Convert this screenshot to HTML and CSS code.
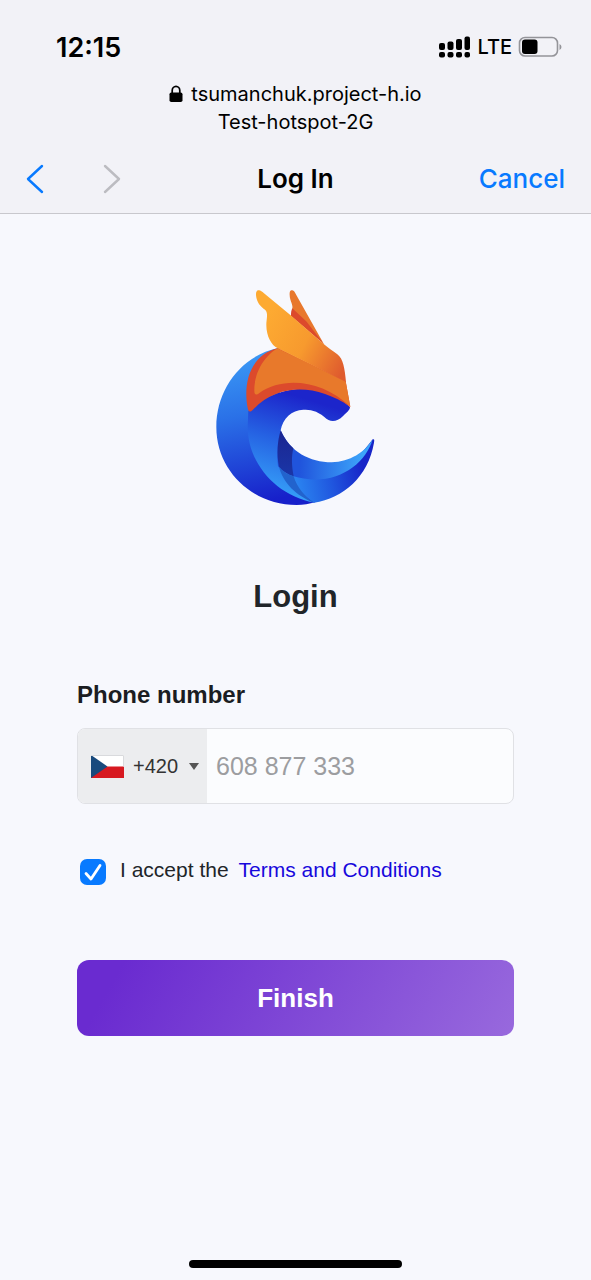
FILE: index.html
```html
<!DOCTYPE html>
<html lang="en">
<head>
<meta charset="utf-8">
<meta name="viewport" content="width=device-width, initial-scale=1">
<title>Log In</title>
<link rel="stylesheet" href="styles.css">
</head>
<body>
<header class="chrome">
  <div class="status">
    <span class="clock">12:15</span>
    <div class="indicators">
      <svg class="signal" width="32" height="22" viewBox="0 0 32 22" aria-hidden="true">
        <g fill="#000">
          <rect x="0" y="7" width="6" height="7" rx="2"/><rect x="8.500" y="5.500" width="6" height="8.500" rx="2"/><rect x="17" y="3" width="6" height="11" rx="2"/><rect x="25.500" y="0.500" width="5.500" height="13.500" rx="2"/>
          <rect x="0" y="16" width="6" height="5.500" rx="2"/><rect x="8.500" y="16" width="6" height="5.500" rx="2"/><rect x="17" y="16" width="6" height="5.500" rx="2"/><rect x="25.500" y="16" width="5.500" height="5.500" rx="2"/>
        </g>
      </svg>
      <span class="network">LTE</span>
      <svg class="battery" width="44" height="22" viewBox="0 0 44 22" aria-hidden="true">
        <rect x="1.500" y="1.500" width="38" height="18.500" rx="5.500" fill="none" stroke="#949499" stroke-width="1.600"/>
        <rect x="4" y="3.500" width="15.500" height="14.500" rx="3" fill="#000"/>
        <path d="M41.500 8q2 1 2 3t-2 3z" fill="#949499"/>
      </svg>
    </div>
  </div>
  <div class="site">
    <div class="host">
      <svg width="14" height="18" viewBox="0 0 14 18" aria-hidden="true"><rect x="0.500" y="7.500" width="13" height="9.500" rx="1.800"/><path d="M3.200 8.500V5.500a3.800 4.200 0 0 1 7.600 0v3" fill="none" stroke="#000" stroke-width="1.700"/></svg>
      <span>tsumanchuk.project-h.io</span>
    </div>
    <div>Test-hotspot-2G</div>
  </div>
  <nav class="toolbar">
    <div class="arrows">
      <button class="arrow" type="button" aria-label="Back"><svg width="18" height="30" viewBox="0 0 18 30"><path d="M16 2L2 15L16 28" fill="none" stroke="#087aff" stroke-width="2.400" stroke-linecap="round" stroke-linejoin="round"/></svg></button>
      <button class="arrow" type="button" aria-label="Forward" disabled><svg width="18" height="30" viewBox="0 0 18 30"><path d="M2 2L16 15L2 28" fill="none" stroke="#bcbcc1" stroke-width="2.400" stroke-linecap="round" stroke-linejoin="round"/></svg></button>
    </div>
    <span class="title">Log In</span>
    <button class="cancel" type="button">Cancel</button>
  </nav>
</header>
<main class="page">
  <svg class="logo" width="160" height="218" viewBox="48 26 480 654" role="img" aria-label="Logo">
    <defs>
      <linearGradient id="back" gradientUnits="userSpaceOnUse" x1="120" y1="230" x2="210" y2="660"><stop offset="0" stop-color="#3a98f5"/><stop offset="0.400" stop-color="#2a70e7"/><stop offset="0.750" stop-color="#1f42d6"/><stop offset="1" stop-color="#1720ca"/></linearGradient>
      <linearGradient id="wave" gradientUnits="userSpaceOnUse" x1="300" y1="350" x2="210" y2="640"><stop offset="0" stop-color="#1c25cb"/><stop offset="0.450" stop-color="#2560e2"/><stop offset="1" stop-color="#36a2f9"/></linearGradient>
      <linearGradient id="tail" gradientUnits="userSpaceOnUse" x1="290" y1="610" x2="490" y2="570"><stop offset="0" stop-color="#2a83f0"/><stop offset="0.500" stop-color="#2057df"/><stop offset="1" stop-color="#1725c8"/></linearGradient>
      <linearGradient id="tip" gradientUnits="userSpaceOnUse" x1="300" y1="530" x2="490" y2="540"><stop offset="0" stop-color="#2054dc"/><stop offset="1" stop-color="#3da5fa"/></linearGradient>
      <linearGradient id="shade" x1="0" y1="0" x2="0" y2="1"><stop offset="0" stop-color="#1b2590"/><stop offset="1" stop-color="#1a36a8"/></linearGradient>
      <linearGradient id="ear" gradientUnits="userSpaceOnUse" x1="190" y1="130" x2="435" y2="260"><stop offset="0" stop-color="#fdaa32"/><stop offset="0.500" stop-color="#f79a2e"/><stop offset="1" stop-color="#df5b2e"/></linearGradient>
    </defs>
    <path fill="url(#back)" d="M234 203C125 226 49 325 49 440C49 572 158 674 290 674C310 674 328 671 346 666L240 560L240 203Z"/>
    <path fill="url(#wave)" d="M145 392C230 310 370 300 450 380C450 390 437 399 430 406C409 427 390 427 373 410C350 390 330 388 310 388C275 389 248 415 242 450C225 550 270 630 342 667C225 645 143 545 143 440Z"/>
    <path fill="url(#tail)" d="M234 510C260 600 400 640 518 477C524 475 523 480 522 487C504 590 430 653 342 667C300 640 265 600 252 560Z"/>
    <path fill="url(#tip)" d="M242 450C270 515 330 546 395 546C450 545 495 515 518 477C500 540 435 598 345 598C300 597 255 585 234 558C230 520 232 480 242 450Z"/>
    <path fill="url(#shade)" d="M242 450C252 473 264 489 280 504C274 530 275 555 281 588C263 582 248 573 237 559C229 520 233 480 242 450Z"/>
    <path fill="#2263cd" d="M237 559C248 573 263 582 281 588C290 620 315 650 342 667C290 647 249 608 237 559Z"/>
    <path fill="#dc4a2c" d="M234 203L437 303L451 380C350 310 235 308 158 389C148 398 145 393 143 383C130 315 145 226 234 203Z"/>
    <path fill="#e8792b" d="M232 204L437 303L451 379C365 298 250 288 178 338C168 346 163 343 163 332C162 280 190 230 232 204Z"/>
    <path fill="#e8782d" d="M277 30C269 30 269 36 269 44C269 62 282 75 276 88L372 192L291 48C285 36 282 31 277 30Z"/>
    <path fill="#dc4a2c" d="M277 84C273 92 273 99 273 107L372 192L320 124Z"/>
    <path fill="url(#ear)" d="M177 30C169 30 168 36 168 45C170 66 181 79 195 88C206 98 199 116 199 135C199 168 215 196 232 203L438 305C434 265 430 235 412 222C398 211 386 205 372 192L271 104L192 39C186 34 182 31 177 30Z"/>
  </svg>
  <h1 class="heading">Login</h1>
  <form class="form" onsubmit="return false">
    <label class="label" for="phone">Phone number</label>
    <div class="field">
      <div class="country">
        <svg width="33" height="23" viewBox="0 0 33 23" aria-hidden="true"><path fill="#fff" d="M0 0h33v12H0z"/><path fill="#d71920" d="M0 11.500h33V23H0z"/><path fill="#194a7d" d="M0 0l16.500 11.500L0 23z"/><path fill="none" stroke="#d9dadd" stroke-width="1" d="M0 .5h32.500v11"/></svg>
        <select class="code" aria-label="Country code"><option>+420</option></select>
        <svg width="10" height="7" viewBox="0 0 10 7" aria-hidden="true"><path fill="#555" d="M0 0h10L5 7z"/></svg>
      </div>
      <input class="phone" id="phone" type="tel" placeholder="608 877 333">
    </div>
    <div class="terms">
      <span class="check">
        <input class="box" id="accept" type="checkbox" checked>
        <svg class="tick" width="26" height="26" viewBox="0 0 26 26" aria-hidden="true"><path d="M6 14.500L11 20L20 6.500" fill="none" stroke="#fff" stroke-width="2.800" stroke-linecap="round" stroke-linejoin="round"/></svg>
      </span>
      <label for="accept">I accept the</label>
      <a class="link" href="#terms">Terms and Conditions</a>
    </div>
    <button class="finish" type="submit">Finish</button>
  </form>
</main>
<footer class="home"><span class="bar"></span></footer>
</body>
</html>
```
FILE: styles.css
```css
* { box-sizing: border-box; }

body {
  margin: 0;
  min-height: 100vh;
  display: flex;
  flex-direction: column;
  background: #f7f8fd;
  color: #212529;
  font-family: "Liberation Sans", Arial, sans-serif;
}

button, input, select { font-family: inherit; }

button {
  padding: 0;
  border: 0;
  background: none;
}

.chrome {
  background: #f2f2f7;
  border-bottom: 1px solid #c8c8cd;
  color: #000;
  font-family: Inter, sans-serif;
}

.status {
  display: flex;
  justify-content: space-between;
  align-items: center;
  padding: 30px 29px 0 56px;
  height: 64px;
}

.clock {
  font-size: 27px;
  font-weight: 600;
}

.indicators {
  display: flex;
  align-items: center;
  gap: 6px;
}

.network {
  font-size: 20px;
  font-weight: 500;
}

.signal { margin-right: 0; }

.site {
  padding-top: 16px;
  font-size: 20px;
  line-height: 28px;
  text-align: center;
}

.host {
  display: flex;
  justify-content: center;
  align-items: center;
  gap: 8px;
}

.toolbar {
  display: grid;
  grid-template-columns: 1fr auto 1fr;
  align-items: center;
  height: 77px;
  padding: 8px 26px 0;
}

.arrows {
  display: flex;
  gap: 59px;
}

.arrow svg { display: block; }

.title {
  font-size: 26px;
  font-weight: 600;
}

.toolbar .cancel {
  justify-self: end;
  color: #087aff;
  font-size: 26px;
  font-weight: 500;
}

.page {
  flex: 1;
  display: flex;
  flex-direction: column;
  align-items: center;
  padding: 75px 77px 0;
}

.logo { display: block; }

.heading {
  margin: 70px 0 0;
  font-size: 31px;
  line-height: 40px;
}

.form {
  align-self: stretch;
  display: flex;
  flex-direction: column;
  margin-top: 63px;
}

.label {
  color: #1b1d22;
  font-size: 24px;
  font-weight: 700;
  line-height: 30px;
}

.field {
  display: flex;
  height: 76px;
  margin-top: 18px;
  overflow: hidden;
  border: 1px solid #e0e1e5;
  border-radius: 8px;
  background: #fbfcfe;
}

.country {
  display: flex;
  align-items: center;
  gap: 9px;
  padding: 0 8px 0 13px;
  background: #ecedef;
}

.code {
  appearance: none;
  width: 47px;
  padding: 0;
  border: 0;
  background: none;
  color: #333;
  font-size: 20px;
}

.phone {
  flex: 1;
  min-width: 0;
  padding: 0 9px;
  border: 0;
  background: none;
  color: #333;
  font-size: 25px;
}

.phone::placeholder { color: #9c9da0; }

.terms {
  display: flex;
  align-items: center;
  margin-top: 50px;
  padding-left: 3px;
  font-size: 21px;
  line-height: 32px;
}

.check {
  display: grid;
  margin: 3px 14px 0 0;
}

.box, .tick { grid-area: 1 / 1; }

.box {
  appearance: none;
  width: 26px;
  height: 26px;
  margin: 0;
  border-radius: 7px;
  background: #087aff;
}

.tick {
  pointer-events: none;
}

.link {
  margin-left: 10px;
  color: #1708dc;
  text-decoration: none;
}

.finish {
  height: 76px;
  margin-top: 74px;
  border-radius: 12px;
  background: linear-gradient(120deg, #6a2bd0 10%, #9869dd 100%);
  color: #fff;
  font-size: 26px;
  font-weight: 700;
}

.home {
  display: flex;
  justify-content: center;
  padding: 13px 0 12px;
}

.bar {
  width: 36%;
  height: 8px;
  border-radius: 4px;
  background: #000;
}
```
